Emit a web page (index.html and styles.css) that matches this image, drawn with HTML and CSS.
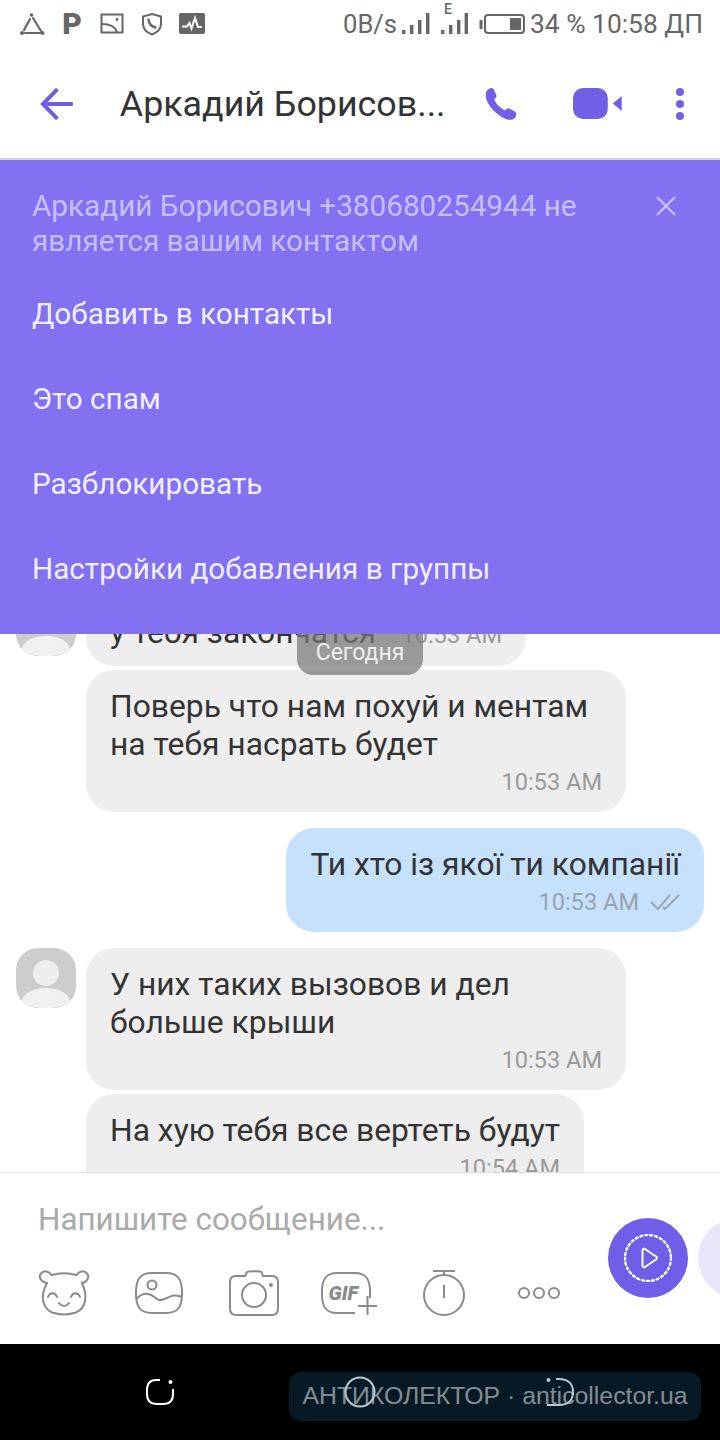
FILE: index.html
```html
<!DOCTYPE html>
<html lang="ru">
<head>
  <meta charset="UTF-8">
  <title>Аркадий Борисович</title>
  <link rel="stylesheet" href="styles.css">
</head>
<body>
  <div class="screen">

    <!-- Status bar -->
    <div class="status-bar">
      <div class="status-icons">
        <svg width="26" height="24" viewBox="0 0 26 24" fill="none" stroke="#666" stroke-width="2.2" stroke-linecap="round"><path d="M14 6 L22 19 M11 7 L5 18 M6 21 H21"/><circle cx="12.5" cy="3" r="1.8" fill="#666" stroke="none"/><circle cx="3" cy="21" r="2" fill="#666" stroke="none"/><circle cx="23.5" cy="21" r="2" fill="#666" stroke="none"/></svg>
        <span class="status-p">P</span>
        <svg width="24" height="22" viewBox="0 0 24 22" fill="none" stroke="#666" stroke-width="2"><rect x="1.5" y="1.5" width="21" height="18"/><path d="M2 11 C10 11 15 13 17 19"/><circle cx="17" cy="6.5" r="1.4" fill="#666" stroke="none"/></svg>
        <svg width="22" height="24" viewBox="0 0 22 24" fill="none" stroke="#666" stroke-width="2"><path d="M11 2 L20 4.5 V12 C20 17 16 20.5 11 22.5 C6 20.5 2 17 2 12 V4.5 Z"/><path d="M7.5 7.5 C8 12 10.5 14.5 14.5 15.5" stroke-width="2.4" stroke-linecap="round"/></svg>
        <svg width="26" height="22" viewBox="0 0 26 22"><rect width="26" height="21" rx="2" fill="#666"/><path d="M3 13.5 H8 L10.5 10 L12.5 15.5 L16 5 L19 14 H23" fill="none" stroke="#fff" stroke-width="2"/></svg>
      </div>
      <div class="status-right">
        <span class="status-speed">0B/s</span>
        <svg class="signal" width="28" height="24" viewBox="0 0 28 24" fill="#666"><rect x="0" y="19" width="3.4" height="4"/><rect x="8" y="14" width="3.4" height="9"/><rect x="16" y="9" width="3.4" height="14"/><rect x="24" y="2" width="3.4" height="21"/></svg>
        <span class="signal-e">
          <small class="signal-letter">E</small>
          <svg width="28" height="24" viewBox="0 0 28 24" fill="#666"><rect x="1" y="19" width="3.4" height="4"/><rect x="9" y="14" width="3.4" height="9"/><rect x="17" y="9" width="3.4" height="14"/><rect x="24.6" y="2" width="3.4" height="21"/></svg>
        </span>
        <svg class="battery" width="46" height="20" viewBox="0 0 46 20" fill="none"><rect x="0.5" y="6" width="3" height="9" fill="#666"/><rect x="6" y="1" width="39" height="18" rx="3" stroke="#666" stroke-width="2"/><rect x="31" y="4" width="11" height="12" fill="#666"/></svg>
        <span class="status-clock">34 % 10:58 ДП</span>
      </div>
    </div>

    <!-- Header -->
    <div class="header">
      <svg class="back" width="34" height="34" viewBox="0 0 34 34" fill="none" stroke="#7060e8" stroke-width="4"><path d="M33 17 H3 M17.5 2 L3 17 L17.5 32"/></svg>
      <div class="header-title">Аркадий Борисов...</div>
      <svg class="call" width="34" height="34" viewBox="0 0 34 34" fill="#7060e8"><path d="M3 3.5 C5 1 8.5 0 9.5 2 L12.5 8 C13 9.5 12 11 10.5 12 C10 13 14 20 21 23.5 C22.5 22 24 21 25.5 21.5 L31 24.5 C33 26 33 29 31 31 C29 33 26 33.5 22 32 C12 28 4 19 2 11 C1.5 8 1.5 5.5 3 3.5 Z"/></svg>
      <svg class="video" width="52" height="34" viewBox="0 0 52 34" fill="#7060e8"><rect x="1" y="1" width="35" height="31" rx="10"/><path d="M50 9 L41 16.5 L50 24 Z"/></svg>
      <svg class="more" width="10" height="34" viewBox="0 0 10 34" fill="#7060e8"><circle cx="5" cy="5" r="4"/><circle cx="5" cy="17" r="4"/><circle cx="5" cy="29" r="4"/></svg>
    </div>

    <!-- Banner -->
    <div class="banner">
      <div class="banner-top">
        <div class="banner-text">Аркадий Борисович +380680254944 не является вашим контактом</div>
        <svg class="banner-close" width="22" height="22" viewBox="0 0 22 22" stroke="#c6bef9" stroke-width="2.4"><path d="M2 2 L20 20 M20 2 L2 20"/></svg>
      </div>
      <div class="banner-item">Добавить в контакты</div>
      <div class="banner-item">Это спам</div>
      <div class="banner-item">Разблокировать</div>
      <div class="banner-item">Настройки добавления в группы</div>
    </div>

    <!-- Chat -->
    <div class="chat">
      <div class="date-pill">Сегодня</div>
      <div class="messages">
        <div class="msg-row first">
          <svg class="avatar" width="60" height="60" viewBox="0 0 60 60"><rect width="60" height="60" rx="22" fill="#cdcdcd"/><circle cx="30" cy="25" r="13" fill="#eeeeee"/><path d="M6 53 C8 44 18 40 30 40 C42 40 52 44 54 53 C48 59 40 60 30 60 C20 60 12 59 6 53 Z" fill="#f1f1f1"/></svg>
          <div class="bubble bubble-inline">
            <div class="bubble-text">у тебя закончатся</div>
            <div class="time">10:53 AM</div>
          </div>
        </div>
        <div class="msg-row cont">
          <div class="bubble">
            <div class="bubble-text">Поверь что нам похуй и ментам на тебя насрать будет</div>
            <div class="meta"><span class="time">10:53 AM</span></div>
          </div>
        </div>
        <div class="msg-row mine">
          <div class="bubble bubble-mine">
            <div class="bubble-text">Ти хто із якої ти компанії</div>
            <div class="meta">
              <span class="time">10:53 AM</span>
              <svg width="30" height="18" viewBox="0 0 30 18" fill="none" stroke="#9aa7b4" stroke-width="2"><path d="M1 9 L8 16 L20 2 M13 14 L15 16 L29 2"/></svg>
            </div>
          </div>
        </div>
        <div class="msg-row">
          <svg class="avatar" width="60" height="60" viewBox="0 0 60 60"><rect width="60" height="60" rx="22" fill="#cdcdcd"/><circle cx="30" cy="25" r="13" fill="#eeeeee"/><path d="M6 53 C8 44 18 40 30 40 C42 40 52 44 54 53 C48 59 40 60 30 60 C20 60 12 59 6 53 Z" fill="#f1f1f1"/></svg>
          <div class="bubble">
            <div class="bubble-text">У них таких вызовов и дел больше крыши</div>
            <div class="meta"><span class="time">10:53 AM</span></div>
          </div>
        </div>
        <div class="msg-row cont">
          <div class="bubble">
            <div class="bubble-text">На хую тебя все вертеть будут</div>
            <div class="meta"><span class="time">10:54 AM</span></div>
          </div>
        </div>
      </div>
    </div>

    <!-- Composer -->
    <div class="composer">
      <div class="composer-left">
        <div class="placeholder">Напишите сообщение...</div>
        <div class="tools">
          <svg width="52" height="46" viewBox="0 0 52 46" fill="none" stroke="#8a8a8a" stroke-width="2"><path d="M9 13 C3 12 0 7 3 3.5 C6 0 11 1 13.5 5 C21 3 31 3 38.5 5 C41 1 46 0 49 3.5 C52 7 49 12 44 13 C50 26 48 38 38 42.5 C31 45 21 45 14 42.5 C4 38 2 26 9 13 Z"/><path d="M10 27 C12 22 17 22 19 27 M33 27 C35 22 40 22 42 27 M21 33 C24 37 28 37 31 33" stroke-linecap="round"/></svg>
          <svg width="50" height="44" viewBox="0 0 50 44" fill="none" stroke="#8a8a8a" stroke-width="2"><path d="M18 2 H32 C44 2 48 8 48 22 C48 36 44 42 32 42 H18 C6 42 2 36 2 22 C2 8 6 2 18 2 Z"/><circle cx="18" cy="14" r="4.5"/><path d="M2 28 C10 20 16 22 23 28 C30 33 36 20 48 26"/></svg>
          <svg width="52" height="46" viewBox="0 0 52 46" fill="none" stroke="#8a8a8a" stroke-width="2"><path d="M17 6 L19 2 C19.5 1 33 1 33.5 2 L35 6 H44 C48 6 50 8 50 12 V38 C50 43 48 45 44 45 H8 C4 45 2 43 2 38 V12 C2 8 4 6 8 6 Z"/><circle cx="26" cy="25" r="12"/><circle cx="43" cy="15" r="2" fill="#8a8a8a" stroke="none"/></svg>
          <span class="gif-icon">
            <svg width="56" height="44" viewBox="0 0 56 44" fill="none" stroke="#8a8a8a" stroke-width="2"><path d="M49 27 C49 25 49 22 49 20 C49 7 44 2 34 2 H16 C6 2 1 7 1 20 V24 C1 37 6 42 16 42 H34"/><path d="M37 35 H56 M46.5 25 V44"/></svg>
            <span class="gif-label">GIF</span>
          </span>
          <svg width="42" height="46" viewBox="0 0 42 46" fill="none" stroke="#8a8a8a" stroke-width="2"><path d="M10 1 H32 M21 1 V6"/><circle cx="21" cy="25" r="20"/><path d="M21 15 V28"/></svg>
          <svg width="44" height="14" viewBox="0 0 44 14" fill="none" stroke="#8a8a8a" stroke-width="2"><circle cx="7" cy="7" r="5"/><circle cx="22" cy="7" r="5"/><circle cx="37" cy="7" r="5"/></svg>
        </div>
      </div>
      <div class="composer-right">
        <div class="send-btn">
          <svg width="48" height="48" viewBox="0 0 48 48" fill="none" stroke="#fff"><circle cx="24" cy="24" r="23" stroke-width="2.4" stroke-dasharray="2 3" stroke-linecap="round"/><path d="M18.5 16.5 C18.5 15 20 14.5 21 15 L32 22.5 C33.5 23.5 33.5 24.5 32 25.5 L21 33 C20 33.5 18.5 33 18.5 31.5 Z" stroke-width="2"/></svg>
        </div>
        <div class="second-btn"></div>
      </div>
    </div>

    <!-- Nav bar -->
    <div class="nav">
      <div class="nav-cell">
        <svg width="30" height="28" viewBox="0 0 30 28" fill="none" stroke="#fff" stroke-width="2"><path d="M15 2 H11 C5 2 2 6 2 12 V16 C2 23 5 26 12 26 H18 C25 26 28 23 28 16 V11"/><circle cx="25.5" cy="4" r="2" fill="#fff" stroke="none"/></svg>
      </div>
      <div class="nav-cell">
        <svg width="32" height="32" viewBox="0 0 32 32" fill="none" stroke="#b9ccd6" stroke-width="2"><circle cx="16" cy="16" r="14.5"/></svg>
      </div>
      <div class="nav-cell">
        <svg width="30" height="30" viewBox="0 0 30 30" fill="none" stroke="#b9ccd6" stroke-width="2"><path d="M11 2 H14 C23 2 28 7 28 15 C28 23 23 28 14 28 H2"/><circle cx="3.5" cy="3" r="2" fill="#b9ccd6" stroke="none"/></svg>
      </div>
    </div>

    <div class="watermark">АНТИКОЛЕКТОР · anticollector.ua</div>
  </div>
</body>
</html>
```

FILE: styles.css
```css
body {
  margin: 0;
  background: white;
  font-family: Roboto, "Noto Sans", sans-serif;
}

.screen {
  position: relative;
  width: 720px;
  height: 1440px;
  display: flex;
  flex-direction: column;
  overflow: hidden;
}

/* Status bar */
.status-bar {
  height: 52px;
  display: flex;
  align-items: center;
  justify-content: space-between;
  padding: 0 17px 4px 12px;
  box-sizing: border-box;
  color: #666;
  flex-shrink: 0;
}

.status-icons {
  display: grid;
  grid-template-columns: repeat(5, 40px);
  justify-items: center;
  align-items: center;
}

.status-p {
  font-size: 30px;
  font-weight: 900;
  line-height: 24px;
}

.status-right {
  display: flex;
  align-items: center;
}

.status-speed {
  font-size: 25.5px;
  margin-right: 5px;
}

.signal {
  margin: 0 10px 2px 0;
}

.signal-e {
  position: relative;
  display: flex;
  margin: 0 11px 2px 0;
}

.signal-letter {
  position: absolute;
  top: -10px;
  left: 4px;
  font-size: 14px;
  font-weight: 500;
}

.battery {
  margin-right: 5px;
}

.status-clock {
  font-size: 26.4px;
}

/* Header */
.header {
  height: 108px;
  flex-shrink: 0;
  display: flex;
  align-items: center;
  padding: 0 35px 2px 40px;
  box-sizing: border-box;
  border-bottom: 2px solid #d2d2d6;
}

.back {
  margin-right: 46px;
}

.header-title {
  width: 366px;
  font-size: 35.8px;
  color: #333;
  white-space: nowrap;
}

.video {
  margin-left: 55px;
}

.more {
  margin-left: 51px;
}

/* Banner */
.banner {
  height: 474px;
  flex-shrink: 0;
  box-sizing: border-box;
  padding: 28px 32px 0 32px;
  background: #8272f2;
  color: #f1effe;
  font-size: 29.7px;
}

.banner-top {
  display: flex;
  justify-content: space-between;
  align-items: flex-start;
  margin-bottom: 13px;
}

.banner-text {
  width: 590px;
  line-height: 35px;
  color: #c6bef9;
}

.banner-close {
  margin: 7px 11px 0 0;
}

.banner-item {
  height: 85px;
  line-height: 85px;
}

/* Chat */
.chat {
  position: relative;
  flex: 1;
  overflow: hidden;
}

.date-pill {
  position: absolute;
  top: 0;
  left: 297px;
  width: 126px;
  height: 41px;
  padding-top: 5px;
  box-sizing: border-box;
  border-radius: 0 0 16px 16px;
  background: rgba(120, 120, 120, 0.72);
  color: #eee;
  font-size: 23px;
  text-align: center;
}

.messages {
  margin-top: -38px;
  padding: 0 16px;
  display: flex;
  flex-direction: column;
}

.msg-row {
  display: flex;
  align-items: flex-start;
  gap: 10px;
  margin-top: 16px;
}

.msg-row.first {
  margin-top: 0;
}

.msg-row.cont {
  margin-top: 4px;
  padding-left: 70px;
}

.msg-row.mine {
  justify-content: flex-end;
}

.avatar {
  flex-shrink: 0;
}

.bubble {
  max-width: 540px;
  box-sizing: border-box;
  padding: 17px 24px 15px;
  border-radius: 28px;
  background: #eeeeee;
  color: #333;
  font-size: 31.8px;
  line-height: 38px;
}

.bubble-inline {
  width: 440px;
  height: 70px;
  display: flex;
  justify-content: space-between;
  align-items: baseline;
}

.bubble-mine {
  background: #c6e1fb;
}

.meta {
  height: 30px;
  margin-top: 4px;
  display: flex;
  justify-content: flex-end;
  align-items: center;
  gap: 11px;
}

.time {
  font-size: 23.6px;
  line-height: 30px;
  color: #9a9a9a;
}

.bubble-mine .time {
  color: #96a3b0;
}

/* Composer */
.composer {
  height: 172px;
  flex-shrink: 0;
  box-sizing: border-box;
  border-top: 1px solid #dddddd;
  display: flex;
  background: white;
  overflow: hidden;
}

.composer-left {
  width: 608px;
  flex-shrink: 0;
}

.placeholder {
  padding: 28px 0 0 38px;
  height: 47px;
  font-size: 31.4px;
  line-height: 38px;
  color: #aaaaaa;
}

.tools {
  display: grid;
  grid-template-columns: repeat(6, 95px);
  justify-items: center;
  align-items: center;
  padding-left: 16px;
  height: 46px;
  margin-top: 22px;
}

.gif-icon {
  position: relative;
  display: flex;
}

.gif-label {
  position: absolute;
  left: 8px;
  top: 10px;
  font-size: 20px;
  font-weight: 900;
  font-style: italic;
  color: #8a8a8a;
}

.composer-right {
  display: flex;
  gap: 10px;
  padding-top: 45px;
}

.send-btn, .second-btn {
  width: 80px;
  height: 80px;
  border-radius: 50%;
  flex-shrink: 0;
}

.send-btn {
  background: #6f5fe8;
  display: flex;
  align-items: center;
  justify-content: center;
}

.second-btn {
  background: #e9e6fb;
}

/* Nav bar */
.nav {
  height: 96px;
  flex-shrink: 0;
  background: black;
  display: flex;
  justify-content: center;
  align-items: flex-start;
}

.nav-cell {
  width: 200px;
  height: 96px;
  display: flex;
  align-items: center;
  justify-content: center;
}

.nav-cell svg {
  position: relative;
  z-index: 1;
}

.watermark {
  position: absolute;
  left: 289px;
  top: 1372px;
  width: 412px;
  height: 49px;
  border-radius: 12px;
  background: rgba(10, 40, 60, 0.62);
  color: rgba(255, 255, 255, 0.52);
  font-family: "Liberation Sans", sans-serif;
  font-size: 24.8px;
  line-height: 47px;
  text-align: center;
  white-space: nowrap;
}
```
